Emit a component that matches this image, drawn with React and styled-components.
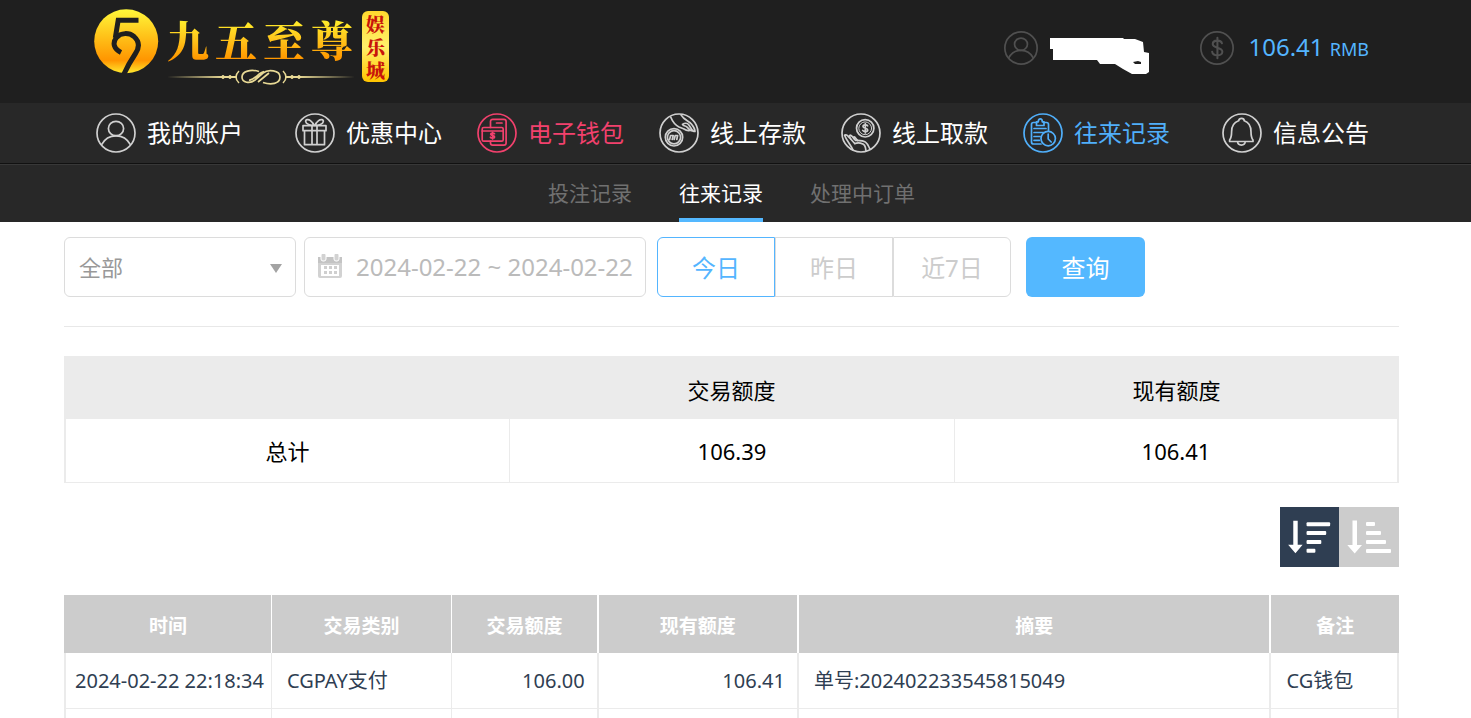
import React, { useState } from 'react';
import styled, { createGlobalStyle } from 'styled-components';

const navItems = [
  { id: 'account', label: '我的账户' },
  { id: 'promo', label: '优惠中心' },
  { id: 'wallet', label: '电子钱包', color: '#f2416d' },
  { id: 'deposit', label: '线上存款' },
  { id: 'withdraw', label: '线上取款' },
  { id: 'records', label: '往来记录', color: '#50affa' },
  { id: 'notice', label: '信息公告' },
];

const tabs = ['投注记录', '往来记录', '处理中订单'];
const ranges = ['今日', '昨日', '近7日'];

const columns = [
  { label: '时间', width: '15.5%' },
  { label: '交易类别', width: '13.5%' },
  { label: '交易额度', width: '10.9%' },
  { label: '现有额度', width: '15%' },
  { label: '摘要', width: '35.4%' },
  { label: '备注', width: '9.7%' },
];

const drawings = {
  account: (
    <>
      <ellipse cx="20" cy="15.5" rx="7.6" ry="7.2" />
      <path d="M5.6 31.6C8.6 26 13.6 22.8 20 22.8S31.4 26 34.4 31.6" />
    </>
  ),
  promo: (
    <>
      <path d="M8 12.7h23v5H8zM9.5 17.7h20v14h-20zM17 12.7v19M22 12.7v19" />
      <path d="M19 12.5C15.5 12.5 11 11 10.7 8.6 10.4 6.2 13.4 6 15.4 7.6 17.2 9 18.5 10.5 19 12.5M20 12.5C23.5 12.5 28 11 28.3 8.6 28.6 6.2 25.6 6 23.6 7.6 21.8 9 20.5 10.5 20 12.5" />
    </>
  ),
  wallet: (
    <>
      <path d="M13.5 14.5V8.5a2.2 2.2 0 0 1 2.2-2.2h11.2a2.2 2.2 0 0 1 2.2 2.2v21.5a2.2 2.2 0 0 1-2.2 2.2H15.7a2.2 2.2 0 0 1-2.2-2.2v-2" />
      <path d="M19.5 10h5.5M5.2 18h21" />
      <rect x="5.2" y="14.5" width="21" height="13.7" rx="1.5" />
      <path d="M17.5 20.7c-.6-.8-3.8-1-3.8.6s3.9 1 3.9 2.6-3.5 1.5-4.2.3M15.6 19.4v6.6" />
    </>
  ),
  deposit: (
    <>
      <circle cx="15" cy="24.3" r="8.7" />
      <circle cx="15" cy="24.3" r="6.6" />
      <path d="M10.6 26.5l1-4h2.6l-1 4M15.200 26.500l1-4h2.400l-.8 4" />
      <path d="M11.800 4.200C13.500 8.500 15.500 11.500 20 14L24.500 15.800C26.500 17 28.500 18 30.500 17.400 32.500 16.800 34 18.500 36 18.500 36 16 34.500 13.500 32.600 11.200 29.900 8 25 7 22 1.800" />
      <path d="M23.500 11.400c2-1.300 4.900-1.400 6.200.3l3.600 5.500M23.500 11.400c.8 1.800 3.200 1.400 4.300 2.500l3 3" />
    </>
  ),
  withdraw: (
    <>
      <circle cx="24.2" cy="15.3" r="8.7" />
      <circle cx="24.2" cy="15.3" r="6.4" strokeWidth="1" />
      <path d="M26.6 12.8c-.8-1.4-4.6-1.3-4.6.7s4.7 1.5 4.7 3.5-4 2-5 .4M24.3 10.7v9.2" />
      <path d="M12 37C9.5 31.5 5.4 27.600 3.600 22.200c1-1 2.700.1 4 1.700L9.700 26c-.8-1.700-1.800-3.300-.7-3.800 1.200-.4 2.500 1.500 4 3.400l1.600 1.700c3.400 0 7.400-.3 9.900 1.800 2.800 2.200 3.200 5.200 4.500 6.800" />
      <path d="M9.700 26l4 4.500M13 25.600c-1-1.300-.3-2.200.9-1.300l2.700 3.200M13.700 30.700c3.300-1.400 8.400-.7 9.800 1.500 1 1.700 1.300 3.500 1.500 5.600" />
    </>
  ),
  records: (
    <>
      <path d="M18 31H10.5A2 2 0 0 1 8.500 29V11.500a2 2 0 0 1 2-2h3.200M20.500 9.500h3a2 2 0 0 1 2 2V18" />
      <path d="M13.500 12.500V8.800h1.800C15.300 5 19.300 5 19.300 8.800h1.700v3.700zM11 15.500h12M11 19.500h10M11 23.500h6M11 27.300h5.500" />
      <circle cx="25.2" cy="25.6" r="7.2" />
      <path d="M25.2 21v5l3 3" />
    </>
  ),
  notice: (
    <>
      <path d="M7.600 28.500V27c1.600-2 2-4.500 2-8.200 0-5.300 2.700-9.500 7-11C17.200 4.500 22 4.500 22.300 7.800c4.300 1.500 6.700 5.700 6.700 11 0 3.700.3 6.200 2 8.200v1.500z" />
      <path d="M15.600 28.800c.2 4.400 7.400 4.400 7.600 0" />
    </>
  ),
  dollar: (
    <path d="M25.800 14.500c-.8-4.300-10.800-4.500-10.800.9 0 5.200 11.300 3.500 11.300 8.900 0 6-11.300 5.700-12 0M20.500 8v24" strokeWidth="2.400" />
  ),
};

function RingIcon({ name, size = 40, stroke = 1.7 }) {
  return (
    <Ring width={size} height={size} viewBox="0 0 40 40" strokeWidth={stroke} aria-hidden="true">
      <circle cx="20" cy="20" r="19" />
      {drawings[name]}
    </Ring>
  );
}

function Logo() {
  return (
    <LogoLink href="#home">
      <svg width="65" height="65" viewBox="0 0 65 65" aria-hidden="true">
        <defs>
          <linearGradient id="coin" x1="0" y1="0" x2="0" y2="1">
            <stop offset="0" stopColor="#fff83a" />
            <stop offset="0.4" stopColor="#ffc51b" />
            <stop offset="0.8" stopColor="#ff9500" />
            <stop offset="1" stopColor="#ffe92f" />
          </linearGradient>
        </defs>
        <circle cx="32.2" cy="32.2" r="32" fill="url(#coin)" />
        <g fill="none" stroke="#1f1f1f" strokeWidth="5">
          <path d="M44.500 11.200H24.200L21.300 29" />
          <path d="M27 43.500C20 40 18 34 22.500 28.500 27 23.500 35 23.500 40 27.500 45.500 32.500 45.500 38.500 41.500 44.500 37.500 50.500 34 56 30 65" />
        </g>
      </svg>
      <Brand>
        <BrandName>
          <span>九</span>
          <span>五</span>
          <span>至</span>
          <span>尊</span>
        </BrandName>
        <svg width="188" height="16" viewBox="0 0 188 16" fill="none" stroke="#e8d995" aria-hidden="true">
          <path d="M0 8L56 7v2zM188 8L132 7v2z" fill="#e8d995" stroke="none" />
          <path d="M54 8h16M118 8h16" strokeWidth="2" />
          <circle cx="56" cy="8" r="1.500" />
          <circle cx="63" cy="8" r="1.500" />
          <circle cx="125" cy="8" r="1.500" />
          <circle cx="132" cy="8" r="1.500" />
          <path d="M72 2c-4 4-4 8 0 12M116 2c4 4 4 8 0 12" strokeWidth="1.500" />
          <path
            d="M92 2.500C84 0 75 2 75 8c0 6 8 7 13 3l8-7c5-4 17-3 17 4s-9 8-17 5.500M82 11c5 1 10-8 15-8.500M91 13l11-9"
            strokeWidth="1.700"
          />
        </svg>
      </Brand>
      <Stamp>
        <span>娱</span>
        <span>乐</span>
        <span>城</span>
      </Stamp>
    </LogoLink>
  );
}

function SortIcon({ bars }) {
  return (
    <svg width="100%" height="60" viewBox="0 0 60 60" fill="#fff" aria-hidden="true">
      <path d="M13.500 13.500h4.500v24.500h5L15.700 46.500 8.300 38h5.200z" />
      {bars.map((w, i) => (
        <rect key={i} x="27" y={15 + i * 9} width={w} height="4" rx="1" />
      ))}
    </svg>
  );
}

function App() {
  const [tab, setTab] = useState(1);
  const [range, setRange] = useState(0);

  return (
    <>
      <GlobalStyle />
      <Header>
        <Logo />
        <Account>
          <RingIcon name="account" size={34} stroke={2} />
          <svg width="100" height="36" viewBox="0 0 100 36" aria-hidden="true">
            <path
              fill="#fff"
              fillRule="evenodd"
              d="M0 0h73l1 1h11l8 3 1 10 5 1v19l-3 2H82l-9-5-8-5H50l-3-4H3V11H0zM83 24l2 2h6v-2l-3-1z"
            />
          </svg>
          <Balance>
            <RingIcon name="dollar" size={34} stroke={2} />
            <Amount>
              106.41 <small>RMB</small>
            </Amount>
          </Balance>
        </Account>
      </Header>

      <Nav>
        {navItems.map((item) => (
          <NavLink key={item.id} href={`#${item.id}`} $color={item.color}>
            <RingIcon name={item.id} />
            {item.label}
          </NavLink>
        ))}
      </Nav>

      <SubNav>
        {tabs.map((label, i) => (
          <SubTab key={label} type="button" $active={i === tab} onClick={() => setTab(i)}>
            {label}
          </SubTab>
        ))}
      </SubNav>

      <Main>
        <Filters>
          <SelectBox>
            <select aria-label="交易类别" defaultValue="all">
              <option value="all">全部</option>
            </select>
            <svg width="12" height="9" viewBox="0 0 12 9" aria-hidden="true">
              <path d="M0 0h12L6 9z" fill="#a3a3a3" />
            </svg>
          </SelectBox>
          <DateBox>
            <svg width="26" height="26" viewBox="0 0 26 26" aria-hidden="true">
              <path fill="#c4c4c4" d="M1 3h24v7H1z" />
              <path fill="#d2d2d2" fillRule="evenodd" d="M1 9h24v13a2 2 0 0 1-2 2H3a2 2 0 0 1-2-2zM4 11v11h18V11z" />
              <rect x="4" y="-1" width="5" height="8" rx="2" fill="#d2d2d2" stroke="#fff" />
              <rect x="17" y="-1" width="5" height="8" rx="2" fill="#d2d2d2" stroke="#fff" />
              <path fill="#cfcfcf" d="M7 12h3v3H7zM12 12h3v3h-3zM17 12h3v3h-3zM7 17h3v3H7zM12 17h3v3h-3zM17 17h3v3h-3z" />
            </svg>
            <input aria-label="日期" defaultValue="2024-02-22 ~ 2024-02-22" />
          </DateBox>
          <RangeGroup>
            {ranges.map((label, i) => (
              <RangeButton key={label} type="button" $active={i === range} onClick={() => setRange(i)}>
                {label}
              </RangeButton>
            ))}
          </RangeGroup>
          <SearchButton type="button">查询</SearchButton>
        </Filters>

        <Summary>
          <thead>
            <tr>
              <th></th>
              <th>交易额度</th>
              <th>现有额度</th>
            </tr>
          </thead>
          <tbody>
            <tr>
              <td>总计</td>
              <td>106.39</td>
              <td>106.41</td>
            </tr>
          </tbody>
        </Summary>

        <SortBar>
          <SortButton type="button" aria-label="降序" $active>
            <SortIcon bars={[24, 20, 15, 9]} />
          </SortButton>
          <SortButton type="button" aria-label="升序">
            <SortIcon bars={[9, 15, 20, 25]} />
          </SortButton>
        </SortBar>

        <Records>
          <colgroup>
            {columns.map((c) => (
              <col key={c.label} style={{ width: c.width }} />
            ))}
          </colgroup>
          <thead>
            <tr>
              {columns.map((c) => (
                <th key={c.label}>{c.label}</th>
              ))}
            </tr>
          </thead>
          <tbody>
            <tr>
              <Cell $tight>2024-02-22 22:18:34</Cell>
              <Cell>CGPAY支付</Cell>
              <Cell $right>106.00</Cell>
              <Cell $right>106.41</Cell>
              <Cell>单号:202402233545815049</Cell>
              <Cell>CG钱包</Cell>
            </tr>
            <tr>
              {columns.map((c) => (
                <Cell key={c.label} />
              ))}
            </tr>
          </tbody>
        </Records>
      </Main>
    </>
  );
}

export default App;

const GlobalStyle = createGlobalStyle`
  * {
    box-sizing: border-box;
  }
  html {
    scrollbar-width: none;
  }
  body {
    margin: 0;
    background: #fff;
    color: #000;
    font-family: "Noto Sans", "Noto Sans CJK SC", sans-serif;
  }
  button, input, select {
    font-family: inherit;
    margin: 0;
  }
  svg {
    display: block;
    flex: none;
  }
`;

const Ring = styled.svg`
  fill: none;
  stroke: currentColor;
  stroke-linecap: round;
  stroke-linejoin: round;
`;

const Header = styled.header`
  display: flex;
  justify-content: space-between;
  height: 103px;
  padding: 9px 102px 0 94px;
  background: #1f1f1f;
`;

const LogoLink = styled.a`
  display: flex;
  align-items: flex-start;
  text-decoration: none;
`;

const Brand = styled.span`
  display: flex;
  flex-direction: column;
  gap: 6px;
  padding: 6px 8px 0;
`;

const BrandName = styled.span`
  display: flex;
  gap: 6px;
  font-size: 42px;
  line-height: 48px;
  font-weight: 900;
  font-family: "Noto Serif CJK SC", "Noto Sans CJK SC", serif;

  span {
    background: linear-gradient(#fff02c 10%, #ffc61c 50%, #ff9800 90%);
    background-clip: text;
    color: transparent;
  }
`;

const Stamp = styled.span`
  display: flex;
  flex-direction: column;
  align-items: center;
  margin-top: 2px;
  margin-left: -1px;
  width: 27px;
  padding: 1px 0;
  border-radius: 6px;
  background: linear-gradient(#ffd92e, #fff06a 50%, #ffc400);
  color: #c8140a;
  font-family: "Noto Serif CJK SC", "Noto Sans CJK SC", serif;
  font-size: 19px;
  line-height: 23px;
  font-weight: 900;
`;

const Account = styled.div`
  display: flex;
  align-items: center;
  gap: 12px;
  height: 78px;
  color: #505050;

  > svg + svg {
    margin-top: 16px;
  }
`;

const Balance = styled.div`
  display: flex;
  align-items: center;
  gap: 14px;
  margin-left: 38px;
`;

const Amount = styled.span`
  color: #54b5ff;
  font-size: 24px;
  line-height: 34px;

  small {
    font-size: 18px;
  }
`;

const Nav = styled.nav`
  display: flex;
  justify-content: space-between;
  align-items: center;
  height: 61px;
  padding: 0 102px 0 96px;
  background: #282828;
  border-bottom: 1px solid #111;
`;

const NavLink = styled.a`
  display: flex;
  align-items: center;
  gap: 11px;
  color: ${(p) => p.$color || '#fff'};
  font-size: 24px;
  line-height: 40px;
  text-decoration: none;

  svg {
    color: ${(p) => p.$color || '#d0d0d0'};
  }
  &:first-child {
    margin-right: 17px;
  }
  &:last-child {
    margin-left: 17px;
  }
`;

const SubNav = styled.div`
  display: flex;
  justify-content: center;
  gap: 47px;
  height: 58px;
  padding-right: 8px;
  background: #282828;
  border-top: 1px solid #383838;
`;

const SubTab = styled.button`
  padding: 0 0 2px;
  border: 0;
  border-top: 4px solid transparent;
  border-bottom: 4px solid ${(p) => (p.$active ? '#54b8ff' : 'transparent')};
  background: none;
  color: ${(p) => (p.$active ? '#fff' : '#707070')};
  font-size: 21px;
  line-height: 30px;
`;

const Main = styled.main`
  padding: 15px 72px 0 64px;
`;

const Filters = styled.div`
  display: flex;
  padding-bottom: 29px;
  margin-bottom: 29px;
  border-bottom: 1px solid #e8e8e8;
`;

const SelectBox = styled.div`
  position: relative;
  width: 232px;
  height: 60px;
  margin-right: 8px;

  select {
    width: 100%;
    height: 100%;
    padding: 0 14px;
    border: 1px solid #dcdcdc;
    border-radius: 6px;
    background: #fff;
    color: #999;
    font-size: 22px;
    appearance: none;
  }
  svg {
    position: absolute;
    right: 14px;
    top: 27px;
  }
`;

const DateBox = styled.label`
  display: flex;
  align-items: center;
  gap: 13px;
  width: 342px;
  height: 60px;
  margin-right: 11px;
  padding: 0 8px 0 12px;
  border: 1px solid #dcdcdc;
  border-radius: 6px;

  input {
    flex: 1;
    min-width: 0;
    padding: 0 0 2px;
    border: 0;
    color: #bbb;
    font-size: 24px;
  }
`;

const RangeGroup = styled.div`
  display: flex;
  margin-right: 15px;
`;

const RangeButton = styled.button`
  width: 118px;
  height: 60px;
  padding: 0 0 2px;
  border: 1px solid ${(p) => (p.$active ? '#54b5ff' : '#dcdcdc')};
  background: #fff;
  color: ${(p) => (p.$active ? '#54b5ff' : '#ccc')};
  font-size: 24px;

  &:first-child {
    border-radius: 6px 0 0 6px;
  }
  &:last-child {
    border-radius: 0 6px 6px 0;
  }
`;

const SearchButton = styled.button`
  width: 119px;
  height: 60px;
  padding: 0 0 2px;
  border: 0;
  border-radius: 6px;
  background: #54b8ff;
  color: #fff;
  font-size: 24px;
`;

const Summary = styled.table`
  width: 100%;
  border-collapse: separate;
  border-spacing: 0;
  table-layout: fixed;
  font-size: 22px;
  line-height: 30px;
  text-align: center;

  th {
    height: 63px;
    padding: 4px 0 0;
    background: #ebebeb;
    font-weight: 400;
  }
  td {
    height: 64px;
    padding: 0;
    border-left: 1px solid #ebebeb;
    border-bottom: 1px solid #ebebeb;
  }
  td:first-child {
    border-left-width: 2px;
  }
  td:last-child {
    border-right: 2px solid #ebebeb;
  }
`;

const SortBar = styled.div`
  display: flex;
  justify-content: flex-end;
  margin: 24px 0 28px;
`;

const SortButton = styled.button`
  width: ${(p) => (p.$active ? '59px' : '60px')};
  padding: 0;
  border: 0;
  background: ${(p) => (p.$active ? '#2f3e52' : '#ccc')};
`;

const Records = styled.table`
  width: 100%;
  border-collapse: separate;
  border-spacing: 0;
  table-layout: fixed;
  font-size: 20px;
  line-height: 30px;

  th {
    height: 58px;
    padding: 4px 0 0;
    border-left: 1px solid #fff;
    background: #ccc;
    color: #fff;
    font-size: 19px;
    font-weight: 700;
  }
  th:first-child {
    border-left-color: #ccc;
  }
  th:nth-child(n + 4),
  td:nth-child(n + 4),
  td:first-child {
    border-left-width: 2px;
  }
  td:last-child {
    border-right: 2px solid #ebebeb;
  }
`;

const Cell = styled.td`
  height: 56px;
  padding: 0 ${(p) => (p.$tight ? '0' : '12px')} 0 ${(p) => (p.$tight ? '9px' : '15px')};
  border-left: 1px solid #ebebeb;
  border-bottom: 1px solid #ebebeb;
  color: #2f3e52;
  text-align: ${(p) => (p.$right ? 'right' : 'left')};
  white-space: nowrap;
`;
